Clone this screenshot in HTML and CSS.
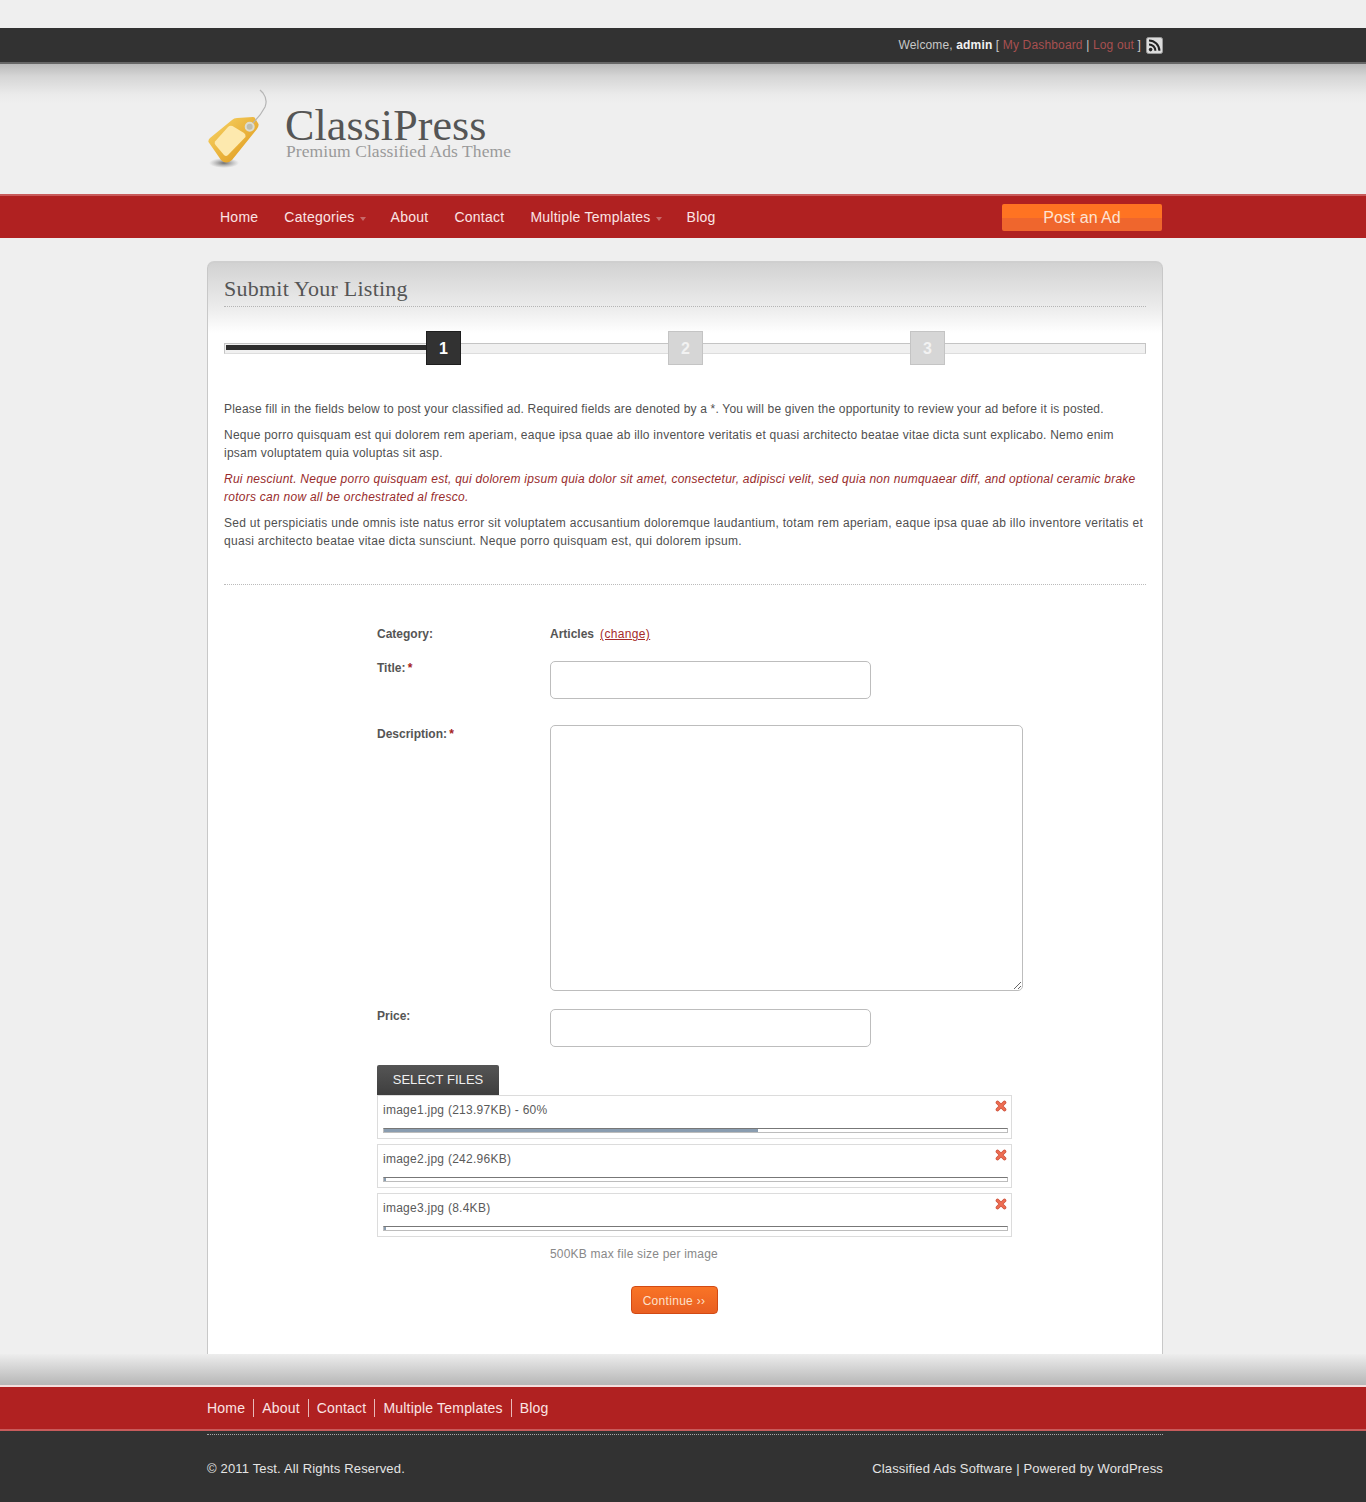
FILE: index.html
```html
<!DOCTYPE html>
<html lang="en">
<head>
<meta charset="utf-8">
<title>Submit Your Listing - ClassiPress</title>
<link rel="stylesheet" href="styles.css">
</head>
<body>
<div class="topbar">
  <div class="wrap topbar-inner">
    <span class="welcome">Welcome, <b>admin</b> [ <a href="#">My Dashboard</a> | <a href="#">Log out</a> ]</span>
    <svg class="rss" viewBox="0 0 17 17" width="17" height="17">
      <rect x="0.5" y="0.5" width="16" height="16" rx="2" fill="#dcdcdc" stroke="#9a9a9a"/>
      <circle cx="4.6" cy="12.6" r="1.8" fill="#222"/>
      <path d="M3 7.4a6.4 6.4 0 0 1 6.4 6.4" fill="none" stroke="#222" stroke-width="2"/>
      <path d="M3 3.4a10.4 10.4 0 0 1 10.4 10.4" fill="none" stroke="#222" stroke-width="2"/>
    </svg>
  </div>
</div>
<header class="masthead">
  <div class="wrap brand">
    <svg class="tag" viewBox="0 0 66 84" width="66" height="84">
      <defs>
        <linearGradient id="tagfill" x1="0" y1="0" x2="1" y2="1">
          <stop offset="0" stop-color="#f8d668"/>
          <stop offset="1" stop-color="#dd9416"/>
        </linearGradient>
        <radialGradient id="tagshadow">
          <stop offset="0" stop-color="#444" stop-opacity=".75"/>
          <stop offset="1" stop-color="#777" stop-opacity="0"/>
        </radialGradient>
      </defs>
      <ellipse cx="17" cy="74" rx="15" ry="5" fill="url(#tagshadow)"/>
      <path d="M1.500 53Q1 51 3 49L25 31Q27 29 30 29L46 28Q48 28 48.500 30L51.500 35Q52 37 50 40L25 71Q19 76 14 71Z" fill="url(#tagfill)"/>
      <path d="M8 52.500L21 38Q23 36 25.500 37L37 44Q39 45.500 38.500 48L21 66Q19 68 17 66L8.500 56Q7 54 8 52.500Z" fill="#fde9ae"/>
      <path d="M46 34C50 30 55 24 58 18C60 13 59 8 56 4L53 1" fill="none" stroke="#b5b5b5" stroke-width="1.200"/>
      <circle cx="42.700" cy="37.700" r="4" fill="#bdbdb0" stroke="#dcdcd0" stroke-width="2"/>
    </svg>
    <div class="brand-text">
      <div class="brand-name">ClassiPress</div>
      <div class="brand-sub">Premium Classified Ads Theme</div>
    </div>
  </div>
</header>
<nav class="mainnav">
  <div class="wrap mainnav-inner">
    <ul class="menu">
      <li><a href="#">Home</a></li>
      <li><a href="#" class="has-sub">Categories</a></li>
      <li><a href="#">About</a></li>
      <li><a href="#">Contact</a></li>
      <li><a href="#" class="has-sub">Multiple Templates</a></li>
      <li><a href="#">Blog</a></li>
    </ul>
    <a href="#" class="post-ad">Post an Ad</a>
  </div>
</nav>
<main class="wrap panel">
  <h1 class="panel-title">Submit Your Listing</h1>
  <div class="steps">
    <div class="steps-fill"></div>
    <div class="step step-on">1</div>
    <div class="step">2</div>
    <div class="step">3</div>
  </div>
  <div class="intro">
    <p class="lead">Please fill in the fields below to post your classified ad. Required fields are denoted by a *. You will be given the opportunity to review your ad before it is posted.</p>
    <p>Neque porro quisquam est qui dolorem rem aperiam, eaque ipsa quae ab illo inventore veritatis et quasi architecto beatae vitae dicta sunt explicabo. Nemo enim ipsam voluptatem quia voluptas sit asp.</p>
    <p class="alert">Rui nesciunt. Neque porro quisquam est, qui dolorem ipsum quia dolor sit amet, consectetur, adipisci velit, sed quia non numquaear diff, and optional ceramic brake rotors can now all be orchestrated al fresco.</p>
    <p class="closing">Sed ut perspiciatis unde omnis iste natus error sit voluptatem accusantium doloremque laudantium, totam rem aperiam, eaque ipsa quae ab illo inventore veritatis et quasi architecto beatae vitae dicta sunsciunt. Neque porro quisquam est, qui dolorem ipsum.</p>
  </div>
  <form class="listing">
    <div class="row row-cat">
      <label class="lbl">Category:</label>
      <div class="cat-value"><b>Articles</b><a href="#">(change)</a></div>
    </div>
    <div class="row row-title">
      <label class="lbl lbl-input">Title: <i>*</i></label>
      <input class="field" type="text">
    </div>
    <div class="row row-desc">
      <label class="lbl lbl-area">Description: <i>*</i></label>
      <textarea class="area"></textarea>
    </div>
    <div class="row row-price">
      <label class="lbl lbl-input">Price:</label>
      <input class="field" type="text">
    </div>
    <button class="select-files" type="button">SELECT FILES</button>
    <div class="files">
      <div class="file">
        <div class="file-head"><span>image1.jpg (213.97KB) - 60%</span>
          <svg class="remove" viewBox="0 0 12 12" width="12" height="12"><path d="M2.500 2.500L9.500 9.500M9.500 2.500L2.500 9.500" stroke="#c9503a" stroke-width="3.600" stroke-linecap="round"/><path d="M2.500 2.500L9.500 9.500M9.500 2.500L2.500 9.500" stroke="#ee6d52" stroke-width="2.400" stroke-linecap="round"/></svg>
        </div>
        <div class="bar"><div class="bar-fill bar-60"></div></div>
      </div>
      <div class="file">
        <div class="file-head"><span>image2.jpg (242.96KB)</span>
          <svg class="remove" viewBox="0 0 12 12" width="12" height="12"><path d="M2.500 2.500L9.500 9.500M9.500 2.500L2.500 9.500" stroke="#c9503a" stroke-width="3.600" stroke-linecap="round"/><path d="M2.500 2.500L9.500 9.500M9.500 2.500L2.500 9.500" stroke="#ee6d52" stroke-width="2.400" stroke-linecap="round"/></svg>
        </div>
        <div class="bar"><div class="bar-fill"></div></div>
      </div>
      <div class="file">
        <div class="file-head"><span>image3.jpg (8.4KB)</span>
          <svg class="remove" viewBox="0 0 12 12" width="12" height="12"><path d="M2.500 2.500L9.500 9.500M9.500 2.500L2.500 9.500" stroke="#c9503a" stroke-width="3.600" stroke-linecap="round"/><path d="M2.500 2.500L9.500 9.500M9.500 2.500L2.500 9.500" stroke="#ee6d52" stroke-width="2.400" stroke-linecap="round"/></svg>
        </div>
        <div class="bar"><div class="bar-fill"></div></div>
      </div>
    </div>
    <div class="note">500KB max file size per image</div>
    <button class="continue" type="button">Continue ››</button>
  </form>
</main>
<div class="foot-shade"></div>
<div class="footnav">
  <ul class="wrap footmenu">
    <li><a href="#">Home</a></li>
    <li><a href="#">About</a></li>
    <li><a href="#">Contact</a></li>
    <li><a href="#">Multiple Templates</a></li>
    <li><a href="#">Blog</a></li>
  </ul>
</div>
<footer class="footer">
  <div class="wrap footer-inner">
    <span>© 2011 Test. All Rights Reserved.</span>
    <span>Classified Ads Software | Powered by WordPress</span>
  </div>
</footer>
</body>
</html>
```

FILE: styles.css
```css
* { box-sizing: border-box; }
html, body { margin: 0; padding: 0; }
body {
  background: #efefef;
  color: #505050;
  font-family: "Liberation Sans", Arial, sans-serif;
  font-size: 12px;
  line-height: 18px;
  letter-spacing: .19px;
  padding-top: 28px;
}
a { color: inherit; text-decoration: none; }
ul { list-style: none; margin: 0; padding: 0; }
b { letter-spacing: 0; }
.wrap { width: 956px; margin-left: 207px; }

/* top bar */
.topbar {
  height: 36px;
  background: #323232;
  border-bottom: 2px solid #666;
}
.topbar-inner {
  display: flex;
  justify-content: flex-end;
  align-items: center;
  height: 34px;
  gap: 5px;
}
.welcome { color: #c8c8c8; letter-spacing: .15px; }
.welcome b { color: #f2f2f2; letter-spacing: .15px; }
.welcome a { color: #a85050; }
.rss { display: block; margin-top: 1px; }

/* header */
.masthead {
  height: 130px;
  background: linear-gradient(#b9b9b9 0, #d5d5d5 12px, #eaeaea 30px, #efefef 40px);
}
.brand {
  display: flex;
  align-items: flex-start;
  padding-top: 25px;
}
.tag { display: block; flex: none; margin-right: 12px; }
.brand-text { padding-top: 20px; }
.brand-name {
  font-family: "Liberation Serif", Georgia, serif;
  font-size: 44px;
  line-height: 34px;
  color: #555;
  letter-spacing: .1px;
}
.brand-sub {
  font-family: "Liberation Serif", Georgia, serif;
  font-size: 17.500px;
  line-height: 16px;
  color: #9a9a9a;
  letter-spacing: .08px;
  margin-left: 1px;
}

/* main nav */
.mainnav {
  height: 44px;
  background: #b02121;
  border-top: 2px solid #c85b5b;
}
.mainnav-inner {
  display: flex;
  justify-content: space-between;
  align-items: center;
  height: 42px;
  padding: 0 1px 0 13px;
}
.menu { display: flex; gap: 26px; font-size: 14px; letter-spacing: .25px; color: #fbe4e4; }
.has-sub { position: relative; padding-right: 10px; }
.has-sub::after {
  content: "";
  position: absolute;
  right: -1px;
  top: 8px;
  border: 3.500px solid transparent;
  border-top: 4px solid #c76a6a;
}
.post-ad {
  width: 160px;
  height: 27px;
  border-radius: 2px;
  background: linear-gradient(#ff7322 0, #ff7322 50%, #ef662d 50%, #ef662d 100%);
  color: #fde3d3;
  font-size: 16px;
  letter-spacing: 0;
  line-height: 27px;
  text-align: center;
}

/* panel */
.panel {
  margin-top: 23px;
  padding: 0 16px 40px;
  background: #fff linear-gradient(#d2d2d2 0, #ececec 45px, #fff 70px) no-repeat;
  border: 1px solid #c8c8c8;
  border-width: 2px 1px 0 1px;
  border-top-color: #cfcfcf;
  border-radius: 7px 7px 0 0;
}
.panel-title {
  margin: 0;
  height: 44px;
  border-bottom: 1px dotted #b5b5b5;
  font-family: "Liberation Serif", Georgia, serif;
  font-weight: normal;
  font-size: 22px;
  line-height: 31px;
  padding-top: 10px;
  color: #555;
  letter-spacing: .25px;
}
.steps {
  position: relative;
  display: flex;
  gap: 207px;
  margin-top: 24px;
  padding-left: 202px;
}
.steps::before {
  content: "";
  position: absolute;
  left: 0;
  right: 0;
  top: 12px;
  height: 9px;
  background: #f0f0f0;
  border: 1px solid #c4c4c4;
  border-bottom-color: #ddd;
}
.steps-fill {
  position: absolute;
  left: 2px;
  top: 14px;
  width: 200px;
  height: 5px;
  background: #2e2e2e;
}
.step {
  position: relative;
  width: 35px;
  height: 34px;
  background: #d6d6d6;
  border: 1px solid #c4c4c4;
  color: #f2f2f2;
  font-size: 16px;
  font-weight: bold;
  line-height: 33px;
  letter-spacing: 0;
  text-align: center;
}
.step-on { background: #323232; border-color: #1e1e1e; color: #fff; }

.intro { margin-top: 35px; padding-bottom: 33px; border-bottom: 1px dotted #bbb; }
.intro p { margin: 0 0 8px; letter-spacing: .24px; }
.intro p:last-child { margin-bottom: 0; padding-bottom: 1px; }
.intro .lead { letter-spacing: .19px; }
.intro .alert { color: #982c2c; font-style: italic; letter-spacing: .26px; }
.intro .closing { letter-spacing: .29px; }

/* form */
.listing { margin: 39px 0 0 153px; }
.row { display: grid; grid-template-columns: 173px 1fr; align-items: start; }
.row-cat { padding-top: 1px; margin-bottom: -1px; }
.row-title { margin-top: 19px; }
.row-desc { margin-top: 26px; }
.row-price { margin-top: 18px; }
.lbl { display: block; font-weight: bold; color: #555; letter-spacing: 0; word-spacing: -1px; }
.lbl i { color: #a52222; font-style: normal; }
.lbl-input { margin-top: -2px; }
.lbl-area { margin-top: 0; }
.cat-value b { color: #555; margin-right: 6px; }
.cat-value a { color: #a52a2a; text-decoration: underline; letter-spacing: .35px; }
.field, .area {
  display: block;
  background: #fff;
  border: 1px solid #bdbdbd;
  border-radius: 5px;
  margin: 0;
  padding: 4px;
  outline: none;
}
.field { width: 321px; height: 38px; }
.area { width: 473px; height: 266px; }

.select-files {
  display: block;
  width: 122px;
  height: 30px;
  margin: 18px 0 0;
  padding: 0;
  border: 0;
  border-radius: 2px 2px 0 0;
  background: linear-gradient(#555, #3e3e3e);
  color: #f0f0f0;
  font-family: inherit;
  font-size: 13px;
  letter-spacing: .05px;
  line-height: 30px;
}
.files { width: 635px; display: flex; flex-direction: column; gap: 5px; }
.file { border: 1px solid #dcdcdc; padding: 5px 3px 5px 5px; background: #fff; color: #5a5a5a; letter-spacing: .26px; }
.file-head { display: flex; justify-content: space-between; align-items: flex-start; }
.remove { display: block; margin: -1px 1px 0 0; }
.bar {
  height: 5px;
  margin-top: 9px;
  border: 1px solid #bdbdbd;
  border-top-color: #777;
}
.bar-fill { width: 2px; height: 100%; background: #8a9db0; }
.bar-60 { width: 60%; }
.note { margin: 8px 0 -1px 173px; color: #888; letter-spacing: .2px; }
.continue {
  display: block;
  width: 87px;
  height: 28px;
  margin: 24px 0 0 254px;
  padding: 1px 1px 0 0;
  border: 1px solid #d24a14;
  border-radius: 4px;
  background: linear-gradient(#f97426, #e95f22);
  color: #fde0cb;
  font-family: inherit;
  font-size: 12px;
  letter-spacing: .3px;
}

/* footer */
.foot-shade { height: 33px; background: linear-gradient(#ededed, #b6b6b6 94%, #f3dede 94%); }
.footnav {
  height: 44px;
  background: #b02121;
  border-bottom: 2px solid #c85b5b;
  padding-top: 12px;
}
.footmenu { display: flex; font-size: 14px; letter-spacing: .2px; color: #fbe4e4; }
.footmenu li { height: 18px; line-height: 18px; padding: 0 8px; border-left: 1px solid #e8b9b9; }
.footmenu li:first-child { padding-left: 0; border-left: 0; }
.footer { height: 71px; background: #323232; padding-top: 3px; color: #e4e4e4; }
.footer-inner {
  display: flex;
  justify-content: space-between;
  border-top: 1px dotted #aaa;
  padding-top: 25px;
  font-size: 13px;
  letter-spacing: .16px;
}
```
